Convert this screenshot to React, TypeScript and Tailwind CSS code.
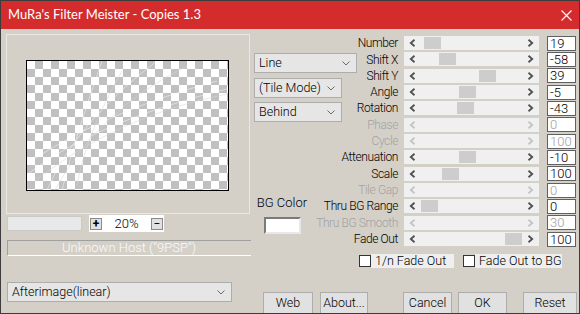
import React from "react";

type Row = {
  label: string;
  value: string;
  thumb?: number; // px from slider left edge; undefined = disabled
};

const rows: Row[] = [
  { label: "Number", value: "19", thumb: 20 },
  { label: "Shift X", value: "-58", thumb: 35 },
  { label: "Shift Y", value: "39", thumb: 75 },
  { label: "Angle", value: "-5", thumb: 55 },
  { label: "Rotation", value: "-43", thumb: 53 },
  { label: "Phase", value: "0" },
  { label: "Cycle", value: "100" },
  { label: "Attenuation", value: "-10", thumb: 55 },
  { label: "Scale", value: "100", thumb: 38 },
  { label: "Tile Gap", value: "0" },
  { label: "Thru BG Range", value: "0", thumb: 17 },
  { label: "Thru BG Smooth", value: "30" },
  { label: "Fade Out", value: "100", thumb: 101 },
];

function Chevron({ dir, on }: { dir: "l" | "r"; on: boolean }) {
  return (
    <svg width="7" height="8" viewBox="0 0 7 8" className="shrink-0">
      <path
        d={dir === "l" ? "M5.5 0.8 L1.8 4 L5.5 7.2" : "M1.5 0.8 L5.2 4 L1.5 7.2"}
        fill="none"
        stroke={on ? "#505050" : "#c4c4c4"}
        strokeWidth="1.8"
      />
    </svg>
  );
}

function Select({ label, className }: { label: string; className: string }) {
  return (
    <div
      className={`flex items-center justify-between whitespace-nowrap border border-[#adadad] bg-[#e6e6e6] pl-[4px] pr-[6px] text-[12.5px] font-light text-black ${className}`}
    >
      <span>{label}</span>
      <svg width="8" height="5" viewBox="0 0 8 5">
        <path d="M0.5 0.5 L4 4 L7.5 0.5" fill="none" stroke="#6a6a6a" strokeWidth="1" />
      </svg>
    </div>
  );
}

function SliderRow({ row }: { row: Row }) {
  const on = row.thumb !== undefined;
  return (
    <div className="flex h-[16.33px] items-center">
      <div
        className={`flex w-[41px] shrink-0 justify-end whitespace-nowrap text-[12px] font-light tracking-[-0.4px] ${
          on ? "text-black" : "text-[#a3a3a3]"
        }`}
      >
        {row.label}
      </div>
      <div className="relative ml-[6px] flex h-[14px] w-[135px] items-center justify-between bg-[#f0f0f0] px-[5px]">
        <Chevron dir="l" on={on} />
        {on && (
          <div
            className="absolute top-[1px] h-[12px] w-[17px] bg-[#cdcdcd]"
            style={{ left: row.thumb }}
          />
        )}
        <Chevron dir="r" on={on} />
      </div>
      <div
        className={`ml-[8px] flex h-[15px] w-[29px] items-center border border-[#606060] bg-white pl-[2px] text-[13px] font-light leading-none ${
          on ? "text-black" : "text-[#a0a0a0]"
        }`}
      >
        {row.value}
      </div>
    </div>
  );
}

function Btn({ label, className }: { label: string; className: string }) {
  return (
    <div
      className={`flex h-[22px] shrink-0 items-center justify-center border border-[#adadad] bg-[#e1e1e1] text-[12.5px] font-light text-black ${className}`}
    >
      {label}
    </div>
  );
}

function Check({ label, className }: { label: string; className: string }) {
  return (
    <div className={`flex h-[14px] items-center ${className}`}>
      <div className="h-[12px] w-[12px] shrink-0 border border-[#333] bg-white" />
      <div className="flex h-[14px] flex-1 items-center whitespace-nowrap bg-[#efefef] pl-[4px] text-[12.5px] font-light text-black">
        {label}
      </div>
    </div>
  );
}

export default function App() {
  return (
    <div
      className="flex h-[314px] w-[580px] flex-col overflow-hidden border border-[#3c3c3c] bg-[#d4d0c8]"
      style={{ fontFamily: 'Roboto, "Liberation Sans", sans-serif' }}
    >
      {/* title bar */}
      <div className="flex h-[28px] shrink-0 items-center justify-between bg-[#d42c2c] pl-[7px] pr-[7px]">
        <span
          className="text-[13px] text-white"
          style={{ fontFamily: 'Lato, "Noto Sans", sans-serif' }}
        >
          MuRa's Filter Meister - Copies 1.3
        </span>
        <svg width="11" height="11" viewBox="0 0 11 11" className="mt-[1px]">
          <path d="M0.5 0.5 L10.5 10.5 M10.5 0.5 L0.5 10.5" stroke="#fff" strokeWidth="1.1" />
        </svg>
      </div>

      <div className="flex flex-1 pl-[5px]">
        {/* left column */}
        <div className="flex w-[244px] shrink-0 flex-col">
          <div className="mt-[5px] h-[180px] w-[244px] border border-[#eae8e3] pl-[19px] pt-[25px]">
            <div className="relative h-[131px] w-[203px] border border-black bg-[repeating-conic-gradient(#c0c0c0_0_25%,#ffffff_0_50%)] bg-[length:16px_16px]">
              <svg width="201" height="129" className="absolute inset-0">
                <g fill="none" stroke="#ffffff" strokeOpacity="0.45" strokeWidth="1">
                  <path d="M2 112 Q 70 60 200 28" />
                  <path d="M4 100 Q 80 50 190 20" />
                  <path d="M20 129 Q 50 60 130 0" />
                  <path d="M35 129 Q 50 70 75 0" />
                </g>
                <g fill="none" stroke="#d6d6d6" strokeOpacity="0.5" strokeWidth="1">
                  <path d="M8 120 Q 90 55 200 33" />
                  <path d="M28 129 Q 70 50 160 5" />
                  <path d="M50 125 Q 58 75 95 10" />
                </g>
              </svg>
            </div>
          </div>
          <div className="mt-[1px] flex h-[17px] items-center">
            <div className="ml-[1px] h-[15px] w-[75px] border border-[#c9c9c9] bg-[#e8e8e8]" />
            <div className="ml-[7px] flex h-[17px] w-[75px] items-center justify-between bg-white px-[1px]">
              <div className="flex h-[12px] w-[12px] items-center justify-center border border-[#8a8a8a] bg-[#e1e1e1] text-[12px] font-bold leading-none text-black">
                +
              </div>
              <span className="text-[13px] font-light text-black">20%</span>
              <div className="flex h-[12px] w-[12px] items-center justify-center border border-[#8a8a8a] bg-[#e1e1e1] text-[12px] leading-none text-black">
                −
              </div>
            </div>
          </div>
          <div className="ml-[1px] mt-[8px] flex h-[16px] w-[244px] items-center justify-center border-t border-l border-b border-[#a0a0a0] border-b-white pr-[1px] text-[13px] font-light text-[#fafafa]">
            Unknown Host ("9PSP")
          </div>
          <Select label="Afterimage(linear)" className="ml-[1px] mt-[26px] h-[20px] w-[225px]" />
        </div>

        {/* right column */}
        <div className="ml-[4px] flex flex-1 flex-col">
          <div className="flex">
            <div className="flex w-[103px] shrink-0 flex-col">
              <Select label="Line" className="mt-[24px] h-[20px] w-[103px]" />
              <Select label="(Tile Mode)" className="mt-[5px] h-[20px] w-[88px]" />
              <Select label="Behind" className="mt-[4px] h-[20px] w-[88px]" />
              <div className="ml-[4px] mt-[71px] flex w-[48px] flex-col items-center">
                <span className="whitespace-nowrap text-[13px] font-light text-black">BG Color</span>
                <div className="mt-[4px] h-[17px] w-[37px] border-2 border-t-[#7a7a7a] border-l-[#7a7a7a] border-r-[#e8e8e8] border-b-[#e8e8e8] bg-white" />
              </div>
            </div>
            <div className="mt-[6px] flex flex-col">
              {rows.map((r) => (
                <SliderRow key={r.label} row={r} />
              ))}
            </div>
          </div>
          <div className="ml-[105px] mt-[7px] flex">
            <Check label="1/n Fade Out" className="w-[95px]" />
            <Check label="Fade Out to BG" className="ml-[9px] w-[96px]" />
          </div>
          <div className="ml-[9px] mt-[24px] flex">
            <Btn label="Web" className="w-[50px]" />
            <Btn label="About..." className="ml-[7px] w-[48px]" />
            <Btn label="Cancel" className="ml-[35px] w-[49px]" />
            <Btn label="OK" className="ml-[6px] w-[49px]" />
            <Btn label="Reset" className="ml-[16px] w-[54px]" />
          </div>
        </div>
      </div>
    </div>
  );
}
